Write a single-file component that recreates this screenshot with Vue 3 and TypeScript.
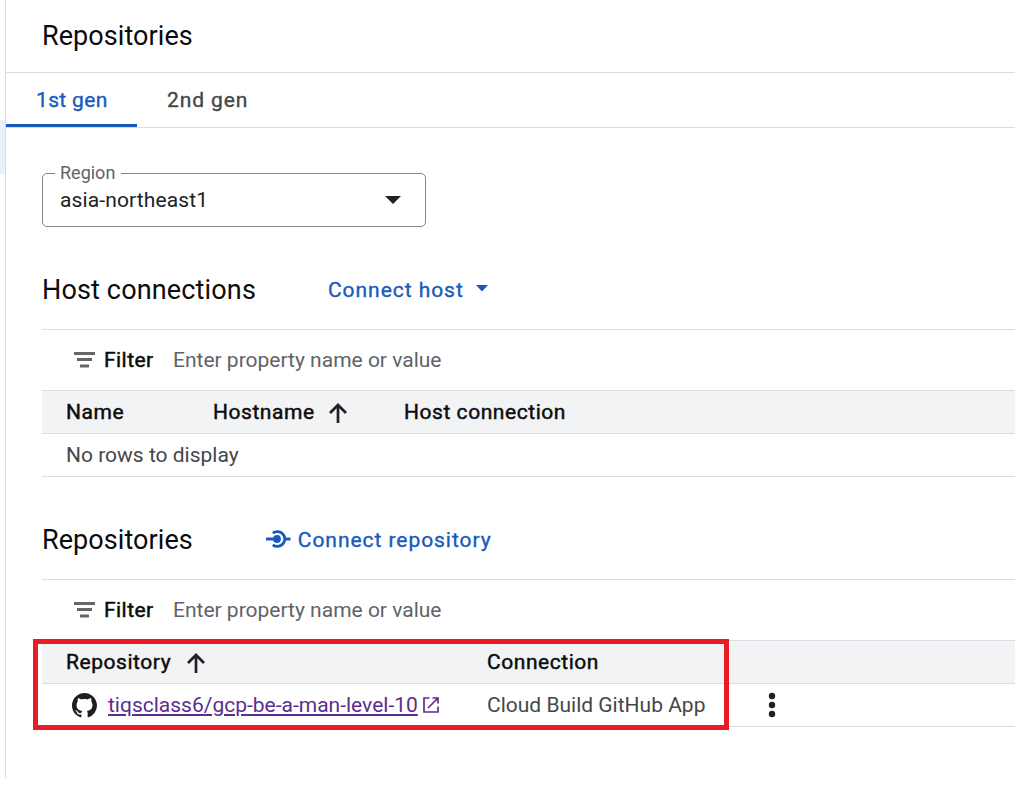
<script setup lang="ts">
interface Column {
  label: string
  sorted?: boolean
}

const tabs: { label: string; active: boolean }[] = [
  { label: '1st gen', active: true },
  { label: '2nd gen', active: false },
]

const hostColumns: Column[] = [
  { label: 'Name' },
  { label: 'Hostname', sorted: true },
  { label: 'Host connection' },
]

const repoColumns: Column[] = [
  { label: 'Repository', sorted: true },
  { label: 'Connection' },
]
</script>

<template>
  <div class="page">
    <aside class="rail"><div class="rail-selected"></div></aside>
    <main class="main">
      <header class="title-bar"><h1 class="heading">Repositories</h1></header>
      <nav class="tabs">
        <a v-for="tab in tabs" :key="tab.label" class="tab" :class="{ active: tab.active }">{{ tab.label }}</a>
      </nav>

      <div class="content">
        <fieldset class="select">
          <legend>Region</legend>
          <div class="select-body">
            <span class="select-value">asia-northeast1</span>
            <svg class="caret" width="16" height="8" viewBox="0 0 16 8"><path d="M0 0h16L8 8z" fill="#202124" /></svg>
          </div>
        </fieldset>

        <section class="section hosts">
          <div class="section-head">
            <h2 class="heading host-heading">Host connections</h2>
            <button class="action host-action">
              <span class="host-action-label">Connect host</span>
              <svg class="action-caret" width="12" height="7" viewBox="0 0 12 7"><path d="M0 0h12L6 6.5z" fill="#185abc" /></svg>
            </button>
          </div>
          <div class="filter">
            <svg class="filter-icon" width="21" height="16" viewBox="0 0 21 16"><path d="M0 0h21v3H0zM3 6h15v3H3zM6 12.500h9v3H6z" fill="#666" /></svg>
            <span class="filter-label">Filter</span>
            <span class="filter-hint">Enter property name or value</span>
          </div>
          <div class="row head host-grid">
            <div v-for="col in hostColumns" :key="col.label" class="cell">
              <span>{{ col.label }}</span>
              <svg v-if="col.sorted" class="sort" width="18" height="20" viewBox="0 0 18 20"><path d="M9 20V2M1 10l8-8 8 8" fill="none" stroke="#202124" stroke-width="2.700" /></svg>
            </div>
          </div>
          <div class="row"><span class="empty">No rows to display</span></div>
        </section>

        <section class="section repos">
          <div class="section-head">
            <h2 class="heading">Repositories</h2>
            <button class="action repo-action">
              <svg class="connect-icon" width="25" height="20" viewBox="0 0 25 20" fill="none" stroke="#185abc" stroke-width="2.800">
                <path d="M0 10h8M19 10h5.500" />
                <path d="M6.800 4.200A7.400 7.400 0 1 1 6.800 15.800" />
                <circle cx="11" cy="10" r="3.900" fill="#185abc" stroke="none" />
              </svg>
              <span class="repo-action-label">Connect repository</span>
            </button>
          </div>
          <div class="filter">
            <svg class="filter-icon" width="21" height="16" viewBox="0 0 21 16"><path d="M0 0h21v3H0zM3 6h15v3H3zM6 12.500h9v3H6z" fill="#666" /></svg>
            <span class="filter-label">Filter</span>
            <span class="filter-hint">Enter property name or value</span>
          </div>
          <div class="row head repo-grid">
            <div v-for="col in repoColumns" :key="col.label" class="cell">
              <span>{{ col.label }}</span>
              <svg v-if="col.sorted" class="sort" width="18" height="20" viewBox="0 0 18 20"><path d="M9 20V2M1 10l8-8 8 8" fill="none" stroke="#202124" stroke-width="2.700" /></svg>
            </div>
          </div>
          <div class="row repo-grid">
            <div class="cell repo-cell">
              <svg class="github" width="25" height="25" viewBox="0 0 16 16"><path fill="#1b1f23" d="M8 0C3.580 0 0 3.580 0 8c0 3.540 2.290 6.530 5.470 7.590.4.070.550-.170.550-.380 0-.190-.010-.820-.010-1.490-2.010.370-2.530-.490-2.690-.940-.090-.230-.480-.940-.820-1.130-.280-.150-.680-.520-.010-.530.630-.010 1.080.580 1.230.820.720 1.210 1.870.870 2.330.660.070-.520.280-.870.510-1.070-1.780-.2-3.640-.890-3.640-3.950 0-.870.310-1.590.820-2.150-.080-.2-.360-1.020.080-2.120 0 0 .670-.210 2.200.820.640-.180 1.320-.270 2-.270s1.360.090 2 .270c1.530-1.040 2.200-.820 2.200-.820.440 1.100.160 1.920.080 2.120.510.560.820 1.270.820 2.150 0 3.070-1.870 3.750-3.650 3.950.290.250.540.730.540 1.480 0 1.070-.010 1.930-.010 2.200 0 .210.150.460.550.380A8.010 8.010 0 0 0 16 8c0-4.420-3.580-8-8-8z" /></svg>
              <a class="repo-link">tiqsclass6/gcp-be-a-man-level-10</a>
              <svg class="external" width="16" height="16" viewBox="0 0 16 16" fill="none" stroke="#5c2d91" stroke-width="1.700"><path d="M6.500 1H1v14h14V9.500M9.500 1H15v5.500M15 1 5 11" /></svg>
            </div>
            <div class="cell"><span class="app">Cloud Build GitHub App</span></div>
            <div class="cell">
              <svg width="8" height="26" viewBox="0 0 8 26" fill="#202124"><circle cx="4" cy="4" r="3.200" /><circle cx="4" cy="13" r="3.200" /><circle cx="4" cy="22" r="3.200" /></svg>
            </div>
          </div>
          <div class="highlight"></div>
        </section>
      </div>
    </main>
  </div>
</template>

<style>
body {
  margin: 0;
  background: #fff;
  overflow: hidden;
}
</style>

<style scoped>
.page {
  display: flex;
  width: 100%;
  height: 807px;
  font-family: "Google Sans", Roboto, sans-serif;
  font-size: 21px;
  color: #202124;
  white-space: nowrap;
  overflow: hidden;
}
.rail {
  box-sizing: border-box;
  flex: none;
  width: 6px;
  height: 778px;
  padding-top: 120px;
  border-right: 1px solid #dadce0;
}
.rail-selected {
  height: 54px;
  background: #e8f0fe;
}
.main {
  flex: 1;
  min-width: 0;
}
.title-bar {
  display: flex;
  align-items: center;
  height: 72px;
  padding-left: 36px;
  border-bottom: 1px solid #dadce0;
}
.heading {
  margin: 0;
  font-size: 27px;
  font-weight: 400;
  letter-spacing: 0.070px;
  color: #0c0c0c;
}
.host-heading {
  width: 214px;
  letter-spacing: 0.150px;
}
.tabs {
  display: flex;
  height: 54px;
  border-bottom: 1px solid #dadce0;
}
.tab {
  box-sizing: border-box;
  display: flex;
  align-items: center;
  height: 54px;
  padding: 0 30px;
  color: #44474a;
  letter-spacing: 0.900px;
  -webkit-text-stroke: 0.350px currentColor;
}
.tab.active {
  width: 131px;
  color: #185abc;
  border-bottom: 3px solid #185abc;
  padding-top: 3px;
  letter-spacing: 0.350px;
}
.content {
  padding-left: 36px;
}
.select {
  box-sizing: border-box;
  width: 384px;
  height: 63px;
  margin: 36px 0 0;
  padding: 0 12px;
  border: 1px solid #80868b;
  border-radius: 5px;
}
.select legend {
  height: 19px;
  line-height: 17px;
  padding: 0 6px 0 5px;
  font-size: 18px;
  color: #5f6368;
}
.select-body {
  display: flex;
  align-items: center;
  justify-content: space-between;
  height: 34px;
  padding: 0 12px 0 5px;
}
.select-value {
  letter-spacing: 0.120px;
}
.section {
  position: relative;
}
.section-head {
  display: flex;
  align-items: center;
  height: 78px;
  border-bottom: 1px solid #dadce0;
}
.hosts {
  margin-top: 24px;
}
.repos {
  margin-top: 24px;
}
.action {
  display: flex;
  align-items: center;
  padding: 0;
  border: 0;
  background: none;
  color: #185abc;
  font: 400 21px "Google Sans", Roboto, sans-serif;
  letter-spacing: 0.950px;
  -webkit-text-stroke: 0.350px currentColor;
}
.host-action {
  gap: 12px;
  margin-left: 72px;
}
.action-caret {
  margin-bottom: 3px;
}
.repo-action {
  gap: 6px;
  margin-left: 74px;
}
.connect-icon {
  margin-left: -1px;
  margin-right: 1px;
  margin-bottom: 2px;
}
.filter {
  display: flex;
  align-items: center;
  height: 60px;
  padding-left: 32px;
}
.filter-label {
  width: 49px;
  margin-left: 9px;
  letter-spacing: 0.450px;
  color: #0c0c0c;
  -webkit-text-stroke: 0.500px currentColor;
}
.filter-hint {
  margin-left: 20px;
  color: #5f6368;
}
.row {
  display: grid;
  align-items: center;
  height: 42px;
  padding-left: 24px;
  border-bottom: 1px solid #dadce0;
  color: #44474a;
}
.head {
  border-top: 1px solid #dadce0;
  background: #f1f3f4;
  color: #0c0c0c;
  letter-spacing: 0.550px;
  -webkit-text-stroke: 0.450px currentColor;
}
.host-grid {
  grid-template-columns: 147px 191px 1fr;
}
.repo-grid {
  grid-template-columns: 421px 281px 1fr;
}
.cell {
  display: flex;
  align-items: center;
}
.sort {
  margin-left: 14px;
  margin-top: 2px;
}
.repo-grid .sort {
  margin-left: 16px;
}
.repo-cell {
  padding-left: 6px;
}
.repo-link {
  margin-left: 11px;
  color: #5c2d91;
  text-decoration: underline;
  text-decoration-thickness: 2px;
  text-underline-offset: 2px;
}
.external {
  margin-left: 5px;
  margin-right: 1px;
}
.github {
  margin-top: 1px;
}
.highlight {
  position: absolute;
  box-sizing: border-box;
  left: -9px;
  bottom: -3px;
  width: 696px;
  height: 91px;
  border: 5px solid #e81c24;
}
</style>
